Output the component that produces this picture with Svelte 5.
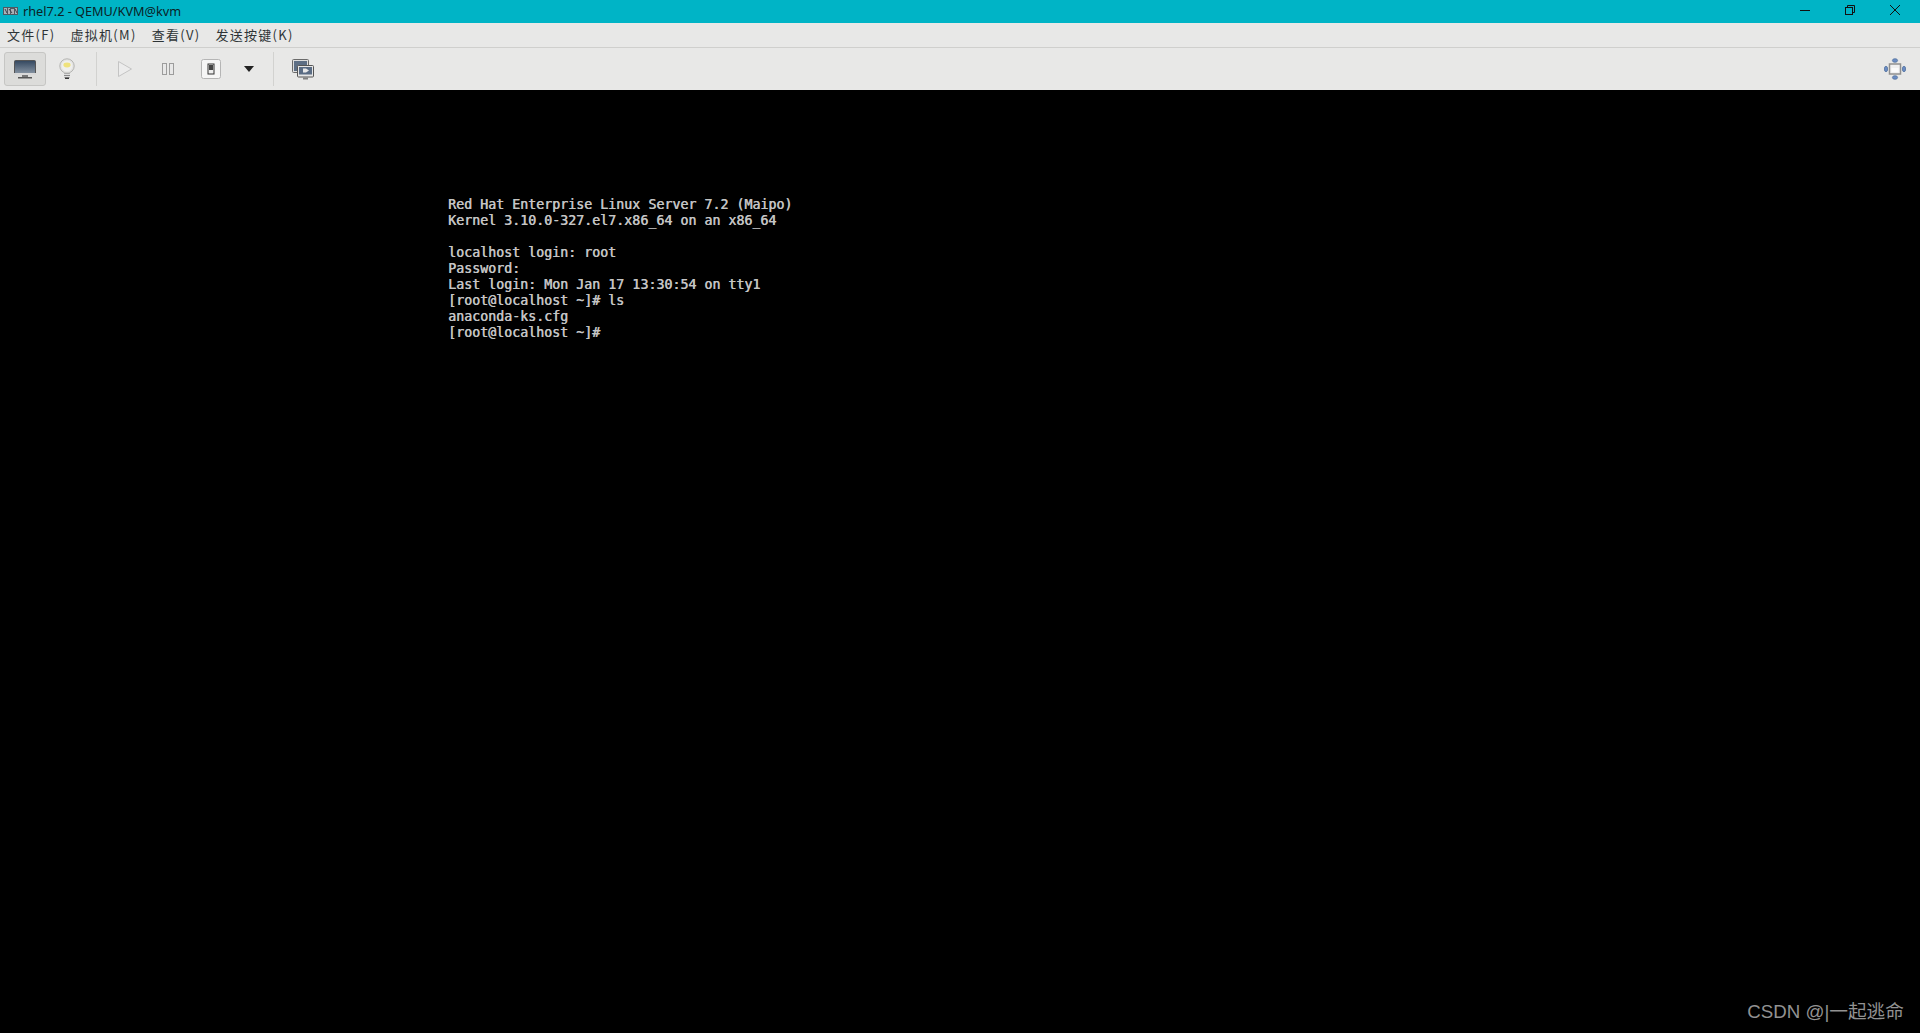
<script>
  // virt-manager console window: title bar, menu, toolbar, VGA console
  const menus = ['文件(F)', '虚拟机(M)', '查看(V)', '发送按键(K)'];
  const lines = [
    'Red Hat Enterprise Linux Server 7.2 (Maipo)',
    'Kernel 3.10.0-327.el7.x86_64 on an x86_64',
    '',
    'localhost login: root',
    'Password:',
    'Last login: Mon Jan 17 13:30:54 on tty1',
    '[root@localhost ~]# ls',
    'anaconda-ks.cfg',
    '[root@localhost ~]#',
  ];
</script>

<div class="win">
  <header class="title">
    <svg class="app-icon" viewBox="0 0 15 8" width="15" height="8">
      <rect x="0" y="0" width="15" height="8" fill="#4f5a63" />
      <path d="M1 1h3v6H1zM5 1h2v6H5zM8 2h3v5H8zM12 1h2v6h-2z" fill="#aab2b8" />
      <path d="M2 2l2 4M6 2l3 4M12 2l2 4" stroke="#39434c" stroke-width="1" />
    </svg>
    <span class="title-text">rhel7.2 - QEMU/KVM@kvm</span>
    <div class="controls">
      <svg viewBox="0 0 12 12" width="12" height="12"><path d="M1 6.5h10" stroke="#111" stroke-width="1" /></svg>
      <svg viewBox="0 0 12 12" width="12" height="12" fill="none" stroke="#111" stroke-width="1">
        <rect x="1.5" y="3.5" width="7" height="7" />
        <path d="M3.5 3.5v-2h7v7h-2" />
      </svg>
      <svg viewBox="0 0 12 12" width="12" height="12"><path d="M1 1l10 10M11 1L1 11" stroke="#111" stroke-width="1" /></svg>
    </div>
  </header>

  <nav class="menu">
    {#each menus as m}<span>{m}</span>{/each}
  </nav>

  <div class="toolbar">
    <button class="tool active" aria-label="console">
      <svg viewBox="0 0 24 22" width="24" height="22">
        <defs>
          <linearGradient id="scr" x1="0" y1="0" x2="0" y2="1">
            <stop offset="0" stop-color="#33475f" />
            <stop offset="1" stop-color="#8b98a6" />
          </linearGradient>
        </defs>
        <rect x="1.5" y="2.5" width="21" height="14" rx="1" fill="url(#scr)" stroke="#555" />
        <rect x="1" y="15" width="22" height="2" fill="#d8d8d8" />
        <rect x="9" y="17" width="6" height="2" fill="#777" />
        <rect x="5" y="19" width="14" height="1.5" fill="#555" />
      </svg>
    </button>
    <button class="tool bulb" aria-label="details">
      <svg viewBox="0 0 18 22" width="18" height="22">
        <circle cx="9" cy="8" r="7.2" fill="#e4e4e2" stroke="#b4b4b2" />
        <circle cx="9" cy="8" r="5.4" fill="#efefed" />
        <ellipse cx="9" cy="7" rx="3.6" ry="2.4" fill="#efe27c" />
        <path d="M6.5 14h5l-.5 2H7z" fill="#cfcfcd" />
        <rect x="6" y="15.5" width="6" height="4" fill="#8a8a8a" />
        <path d="M6 16.5h6M6 18.5h6" stroke="#dedede" />
        <rect x="7" y="19.5" width="4" height="1.5" fill="#333" />
      </svg>
    </button>
    <i class="sep first"></i>
    <button class="tool play" aria-label="run">
      <svg viewBox="0 0 16 18" width="16" height="18"><path d="M1.5 1.5L14.5 9L1.5 16.5z" fill="#ececec" stroke="#c4c4c4" /></svg>
    </button>
    <button class="tool pause" aria-label="pause">
      <svg viewBox="0 0 14 14" width="14" height="14" fill="#e8e8e8" stroke="#9c9c9c">
        <rect x="1.5" y="1.5" width="4" height="11" /><rect x="8.5" y="1.5" width="4" height="11" />
      </svg>
    </button>
    <button class="tool power" aria-label="power">
      <svg viewBox="0 0 20 20" width="20" height="20">
        <rect x="0.5" y="0.5" width="19" height="19" rx="2" fill="#f6f6f6" stroke="#b5b5b5" />
        <rect x="7" y="5" width="6" height="10" fill="#eee" stroke="#333" />
        <rect x="8" y="6" width="4" height="5" fill="#444" />
      </svg>
    </button>
    <button class="tool caret" aria-label="menu">
      <svg viewBox="0 0 10 6" width="10" height="6"><path d="M0 0h10L5 6z" fill="#222" /></svg>
    </button>
    <i class="sep second"></i>
    <button class="tool snap" aria-label="snapshots">
      <svg viewBox="0 0 22 21" width="22" height="21">
        <rect x="0.5" y="0.5" width="16" height="13" rx="1" fill="#dedede" stroke="#6a6a6a" />
        <rect x="2" y="2" width="13" height="10" fill="#5e6f85" />
        <rect x="5.5" y="6.5" width="16" height="11.5" rx="1" fill="#e6e6e6" stroke="#555" />
        <rect x="7" y="8" width="13" height="7.5" fill="#5a6c84" />
        <path d="M11 9.5h3l3 2-3 2h-3z" fill="#e8e8e8" />
        <rect x="11" y="18.5" width="5" height="2" fill="#808080" />
      </svg>
    </button>
    <button class="tool fit" aria-label="fullscreen">
      <svg viewBox="0 0 22 22" width="22" height="22">
        <g fill="#6b8cc4" stroke="#52729f" stroke-width=".8">
          <ellipse cx="11" cy="2.5" rx="2.6" ry="1.8" />
          <ellipse cx="11" cy="19.5" rx="2.6" ry="1.8" />
          <ellipse cx="2" cy="11" rx="1.6" ry="2.8" />
          <ellipse cx="20" cy="11" rx="1.6" ry="2.8" />
        </g>
        <rect x="5.5" y="6" width="11" height="10" fill="#f0f0f0" stroke="#909090" stroke-width="1.5" />
        <rect x="7.5" y="10" width="7" height="4" fill="#fbfbfb" />
      </svg>
    </button>
  </div>

  <main class="console">
    <pre>{lines.join('\n')}</pre>
    <span class="mark">CSDN @|一起逃命</span>
  </main>
</div>

<style>
  :global(body) { margin: 0; background: #000; overflow: hidden; }
  .win { display: flex; flex-direction: column; height: 1033px; font-family: "Noto Sans", "Noto Sans CJK SC", sans-serif; }

  .title { height: 23px; background: #00b4c6; display: flex; align-items: center; padding-left: 3px; }
  .app-icon { margin-right: 5px; margin-top: -2px; }
  .title-text { font-size: 12.7px; color: #0b2226; margin-bottom: 1px; }
  .controls { margin-left: auto; display: flex; gap: 33px; margin-right: 19px; align-items: center; }
  .controls svg { display: block; margin-top: -3px; }

  .menu { height: 24px; box-sizing: content-box; background: #e8e8e7; display: flex; align-items: center; gap: 15px; padding-left: 7px; border-bottom: 1px solid #cfcfcd; color: #2e3436; }
  .menu span { font-size: 13px; font-family: "Noto Sans CJK SC", "Noto Sans", sans-serif; letter-spacing: 1.3px; margin-top: -2px; }

  .toolbar { height: 42px; background: #e8e8e7; display: flex; align-items: center; padding-left: 4px; }
  .tool { appearance: none; border: 0; background: none; padding: 0; display: flex; align-items: center; justify-content: center; height: 34px; }
  .tool svg { display: block; }
  .active { width: 42px; background: #dcdcda; border: 1px solid #c6c6c4; border-radius: 3px; box-sizing: border-box; }
  .bulb { width: 18px; margin-left: 12px; }
  .sep { width: 1px; height: 34px; background: #d2d2d0; }
  .sep.first { margin-left: 20px; }
  .play { width: 16px; margin-left: 20px; }
  .pause { width: 14px; margin-left: 28px; }
  .power { width: 20px; margin-left: 26px; }
  .caret { width: 10px; margin-left: 23px; }
  .sep.second { margin-left: 19px; }
  .snap { width: 22px; margin-left: 18px; }
  .fit { width: 22px; margin-left: auto; margin-right: 14px; }

  .console { flex: 1; background: #000; position: relative; padding: 107px 0 0 448px; }
  pre { margin: 0; font-family: "DejaVu Sans Mono", "Liberation Mono", monospace; font-size: 13.3px; line-height: 16px; color: #c4c4c4; text-shadow: .5px 0 0 #c4c4c4; }
  .mark { position: absolute; right: 16px; bottom: 10px; font-size: 18.7px; color: #929292; font-family: "Liberation Sans", "Noto Sans CJK SC", sans-serif; }
</style>
